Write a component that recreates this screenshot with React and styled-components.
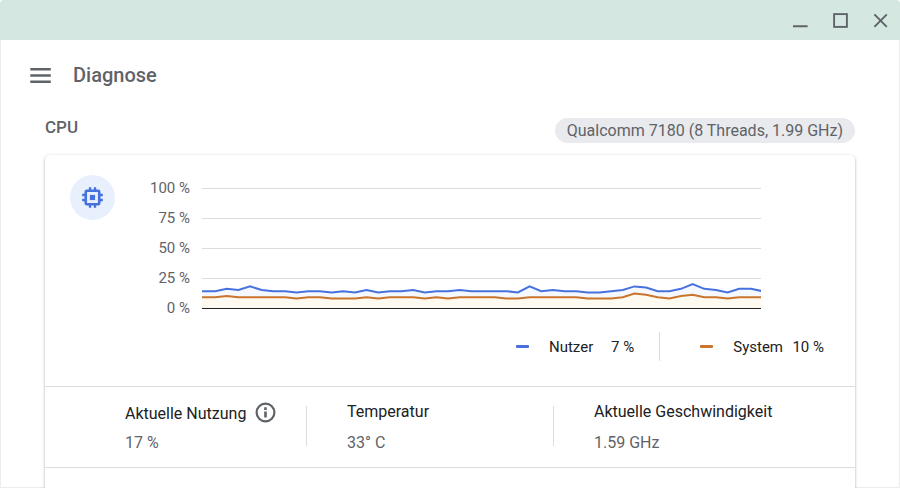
import React from 'react';
import styled, { createGlobalStyle } from 'styled-components';

const GlobalStyle = createGlobalStyle`
  * {
    box-sizing: border-box;
  }

  body {
    margin: 0;
    background: #fff;
    color: #202124;
    font-family: Roboto, "Liberation Sans", sans-serif;
    font-size: 16px;
  }
`;

const Window = styled.div`
  display: flex;
  flex-direction: column;
  height: 100vh;
  overflow: hidden;
  border-radius: 4px 4px 0 0;
  box-shadow: inset 0 0 0 1px #ececec;
`;

const TitleBar = styled.header`
  display: flex;
  justify-content: flex-end;
  flex-shrink: 0;
  height: 40px;
  background: #d4e7e0;
`;

const WindowButton = styled.button`
  display: flex;
  align-items: center;
  justify-content: center;
  width: 40px;
  padding: 0;
  border: none;
  background: none;
  color: #5f6368;
  cursor: pointer;
`;

const Toolbar = styled.div`
  display: flex;
  align-items: center;
  flex-shrink: 0;
  height: 70px;
  padding: 0 30px;
  gap: 22px;
`;

const MenuButton = styled.button`
  display: flex;
  padding: 0;
  border: none;
  background: none;
  color: #5f6368;
  cursor: pointer;
`;

const Title = styled.h1`
  margin: 0;
  color: #5f6368;
  font-size: 20px;
  font-weight: 500;
  line-height: 24px;
`;

const Main = styled.main`
  flex: 1;
  min-height: 0;
  padding: 8px 45px 0;
`;

const SectionHeader = styled.div`
  display: flex;
  justify-content: space-between;
  margin-bottom: 12px;
`;

const SectionTitle = styled.h2`
  margin: 0;
  color: #5f6368;
  font-size: 17px;
  font-weight: 500;
  line-height: 18px;
`;

const Chip = styled.span`
  padding: 0 12px;
  border-radius: 13px;
  background: #e8eaed;
  color: #5f6368;
  line-height: 25px;
`;

const Card = styled.section`
  height: 400px;
  border-radius: 5px;
  background: #fff;
  box-shadow: 0 1px 3px rgba(60, 64, 67, 0.45);
`;

const ChartArea = styled.div`
  display: flex;
  padding: 20px 94px 0 25px;
`;

const IconCircle = styled.div`
  display: flex;
  align-items: center;
  justify-content: center;
  width: 45px;
  height: 45px;
  border-radius: 50%;
  background: #e8f0fe;
  color: #4772de;
`;

const AxisLabels = styled.div`
  display: flex;
  flex-direction: column;
  align-items: flex-end;
  width: 75px;
  margin: -2px 12px 0 0;
  color: #5f6368;
  font-size: 15px;
  line-height: 30px;
`;

const Plot = styled.svg`
  display: block;
  flex: 1;
  min-width: 0;
  height: 121px;
  margin-top: 13px;
`;

const Legend = styled.div`
  display: flex;
  align-items: center;
  justify-content: flex-end;
  height: 29px;
  margin: 9px 31px 25px 0;
  font-size: 15px;
`;

const LegendItem = styled.div`
  display: flex;
  align-items: center;

  & + & {
    height: 100%;
    margin-left: 25px;
    padding-left: 40px;
    border-left: 1px solid #dadce0;
  }
`;

const Swatch = styled.span`
  width: 13px;
  height: 3px;
  margin-right: 20px;
  border-radius: 1px;
  background: ${props => props.$color};
`;

const LegendValue = styled.span`
  min-width: 41px;
  text-align: right;
`;

const Stats = styled.dl`
  display: grid;
  grid-template-columns: 262fr 247fr 301fr;
  align-items: center;
  height: 82px;
  margin: 0;
  padding-bottom: 2px;
  border-top: 1px solid #dadce0;
  border-bottom: 1px solid #dadce0;
`;

const Stat = styled.div`
  display: flex;
  flex-direction: column;
  justify-content: space-between;
  height: 40px;
  padding-left: 40px;
  border-right: 1px solid #dadce0;

  &:first-of-type {
    padding-left: 80px;
  }

  &:last-of-type {
    border-right: none;
  }
`;

const StatLabel = styled.dt`
  display: flex;
  align-items: center;
  gap: 7px;
  margin-top: -4px;
  line-height: 20px;
`;

const InfoButton = styled.button`
  display: flex;
  padding: 0;
  border: none;
  background: none;
  color: #5f6368;
  cursor: pointer;
`;

const StatValue = styled.dd`
  margin: 0 0 -7px;
  color: #5f6368;
  line-height: 20px;
`;

const userUsage = [
  14, 14, 16, 15, 18, 15, 14, 14, 13, 14, 14, 13, 14, 13, 15, 13, 14,
  14, 15, 13, 14, 14, 15, 14, 14, 14, 14, 13, 18, 14, 15, 14, 14,
  13, 13, 14, 15, 18, 17, 14, 14, 16, 20, 16, 15, 13, 16, 16, 14,
];

const systemUsage = [
  9, 9, 10, 9, 9, 9, 9, 9, 8, 9, 9, 8, 8, 8, 9, 8, 9,
  9, 9, 8, 9, 8, 9, 9, 9, 9, 8, 8, 9, 9, 9, 9, 9,
  8, 8, 8, 9, 12, 11, 9, 8, 10, 11, 9, 9, 8, 9, 9, 9,
];

const gridSteps = [100, 75, 50, 25, 0];

// part of a sample interval the graph has scrolled by
const scroll = 0.13;

const toY = (value) => 120 - value * 1.2;
const toPoints = (values) => {
  const points = values.map((value, i) => `${i + scroll},${toY(value)}`);
  return [`0,${toY(values[0])}`, ...points].join(' ');
};

const GridLine = ({ value, color }) => (
  <line x1="0" x2="48" y1={toY(value) + 0.5} y2={toY(value) + 0.5} stroke={color} vectorEffect="non-scaling-stroke" />
);

const UsageChart = () => (
  <Plot viewBox="0 0 48 121" preserveAspectRatio="none" role="img" aria-label="CPU-Auslastung">
    {
      gridSteps.slice(0, 4).map((step) => <GridLine key={step} value={step} color="#dadce0" />)
    }
    <polygon points={`0,120 ${toPoints(userUsage)} 49,120`} fill="#f5f8fe" />
    <polygon points={`0,120 ${toPoints(systemUsage)} 49,120`} fill="#fefaef" />
    <polyline points={toPoints(userUsage)} fill="none" stroke="#4772de" strokeWidth="2" vectorEffect="non-scaling-stroke" />
    <polyline points={toPoints(systemUsage)} fill="none" stroke="#c9752d" strokeWidth="2" vectorEffect="non-scaling-stroke" />
    <GridLine value={0} color="#202124" />
  </Plot>
);

const CpuIcon = () => (
  <svg width="27" height="27" viewBox="0 0 24 24" aria-hidden="true">
    <rect x="6" y="6" width="12" height="12" rx="1" fill="none" stroke="currentColor" strokeWidth="2.3" />
    <rect x="9.7" y="9.7" width="4.6" height="4.6" fill="currentColor" />
    <path d="M9.8 2.8v3M14.2 2.8v3M9.8 18v3.2M14.2 18v3.2M2.8 9.8h3M2.8 14.2h3M18 9.8h3.2M18 14.2h3.2" stroke="currentColor" strokeWidth="2.1" />
  </svg>
);

const InfoIcon = () => (
  <svg width="24" height="24" viewBox="0 0 24 24" aria-hidden="true">
    <circle cx="12.5" cy="10.5" r="8.9" fill="none" stroke="currentColor" strokeWidth="2.2" />
    <path d="M12.5 5.3v2.6M12.5 9.6v6" stroke="currentColor" strokeWidth="2.6" />
  </svg>
);

const App = () => {
  return (
    <Window>
      <GlobalStyle />
      <TitleBar>
        <WindowButton aria-label="Minimieren">
          <svg width="16" height="16" viewBox="0 0 16 16">
            <path d="M1 14.3h14.6" stroke="currentColor" strokeWidth="2" />
          </svg>
        </WindowButton>
        <WindowButton aria-label="Maximieren">
          <svg width="16" height="16" viewBox="0 0 16 16">
            <rect x="2.1" y="2.1" width="12.8" height="12.8" fill="none" stroke="currentColor" strokeWidth="1.9" />
          </svg>
        </WindowButton>
        <WindowButton aria-label="Schließen">
          <svg width="16" height="16" viewBox="0 0 16 16">
            <path d="M2.4 2.4l12.4 12.4M14.8 2.4L2.4 14.8" stroke="currentColor" strokeWidth="1.9" />
          </svg>
        </WindowButton>
      </TitleBar>
      <Toolbar>
        <MenuButton aria-label="Menü">
          <svg width="21" height="15" viewBox="0 0 21 15">
            <path d="M.3 1.2h20.5M.3 7.5h20.5M.3 13.8h20.5" stroke="currentColor" strokeWidth="2.4" />
          </svg>
        </MenuButton>
        <Title>Diagnose</Title>
      </Toolbar>
      <Main>
        <SectionHeader>
          <SectionTitle>CPU</SectionTitle>
          <Chip>Qualcomm 7180 (8 Threads, 1.99 GHz)</Chip>
        </SectionHeader>
        <Card>
          <ChartArea>
            <IconCircle>
              <CpuIcon />
            </IconCircle>
            <AxisLabels>
              {gridSteps.map((step) => <span key={step}>{step} %</span>)}
            </AxisLabels>
            <UsageChart />
          </ChartArea>
          <Legend>
            <LegendItem>
              <Swatch $color="#4772de" />
              Nutzer
              <LegendValue>7 %</LegendValue>
            </LegendItem>
            <LegendItem>
              <Swatch $color="#c9752d" />
              System
              <LegendValue>10 %</LegendValue>
            </LegendItem>
          </Legend>
          <Stats>
            <Stat>
              <StatLabel>
                Aktuelle Nutzung
                <InfoButton aria-label="Informationen zur Nutzung">
                  <InfoIcon />
                </InfoButton>
              </StatLabel>
              <StatValue>17 %</StatValue>
            </Stat>
            <Stat>
              <StatLabel>Temperatur</StatLabel>
              <StatValue>33° C</StatValue>
            </Stat>
            <Stat>
              <StatLabel>Aktuelle Geschwindigkeit</StatLabel>
              <StatValue>1.59 GHz</StatValue>
            </Stat>
          </Stats>
        </Card>
      </Main>
    </Window>
  );
};

export default App;
